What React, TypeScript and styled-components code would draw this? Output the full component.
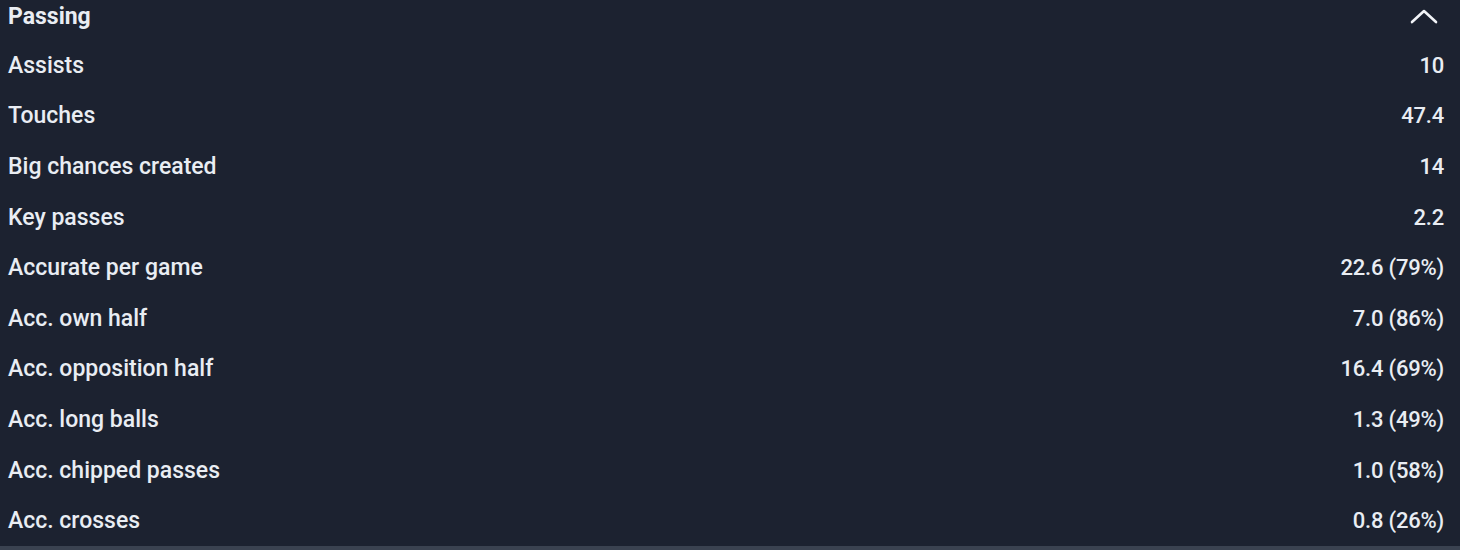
import styled, { createGlobalStyle } from "styled-components";

const GlobalStyle = createGlobalStyle`
  body {
    margin: 0;
    background: #1c2230;
    font-family: Roboto, "Liberation Sans", sans-serif;
  }
`;

const Panel = styled.div`
  width: 1460px;
  height: 550px;
  box-sizing: border-box;
  background: #1c2230;
  color: #e9edf3;
  border-bottom: 4px solid #3a4250;
  display: flex;
  flex-direction: column;
`;

const Header = styled.div`
  height: 40px;
  padding: 0 22px 8px 8px;
  box-sizing: border-box;
  display: flex;
  align-items: center;
  justify-content: space-between;
  font-size: 23px;
  font-weight: 700;
`;

const Row = styled.div`
  height: 50.6px;
  padding: 0 16px 0 8px;
  display: flex;
  align-items: center;
  justify-content: space-between;
  font-weight: 500;
`;

const Label = styled.span`
  font-size: 23px;
`;

const Value = styled.span`
  font-size: 22px;
  letter-spacing: -0.2px;
  text-align: right;
`;

const Chevron = () => (
  <svg width="28" height="18" viewBox="0 0 28 18" fill="none">
    <path d="M2 15 L14 4 L26 15" stroke="#f2f4f8" strokeWidth="2.6" strokeLinecap="round" strokeLinejoin="round" />
  </svg>
);

const stats: [string, string][] = [
  ["Assists", "10"],
  ["Touches", "47.4"],
  ["Big chances created", "14"],
  ["Key passes", "2.2"],
  ["Accurate per game", "22.6 (79%)"],
  ["Acc. own half", "7.0 (86%)"],
  ["Acc. opposition half", "16.4 (69%)"],
  ["Acc. long balls", "1.3 (49%)"],
  ["Acc. chipped passes", "1.0 (58%)"],
  ["Acc. crosses", "0.8 (26%)"],
];

export default function App() {
  return (
    <>
      <GlobalStyle />
      <Panel>
        <Header>
          <span>Passing</span>
          <Chevron />
        </Header>
        {stats.map(([label, value]) => (
          <Row key={label}>
            <Label>{label}</Label>
            <Value>{value}</Value>
          </Row>
        ))}
      </Panel>
    </>
  );
}
